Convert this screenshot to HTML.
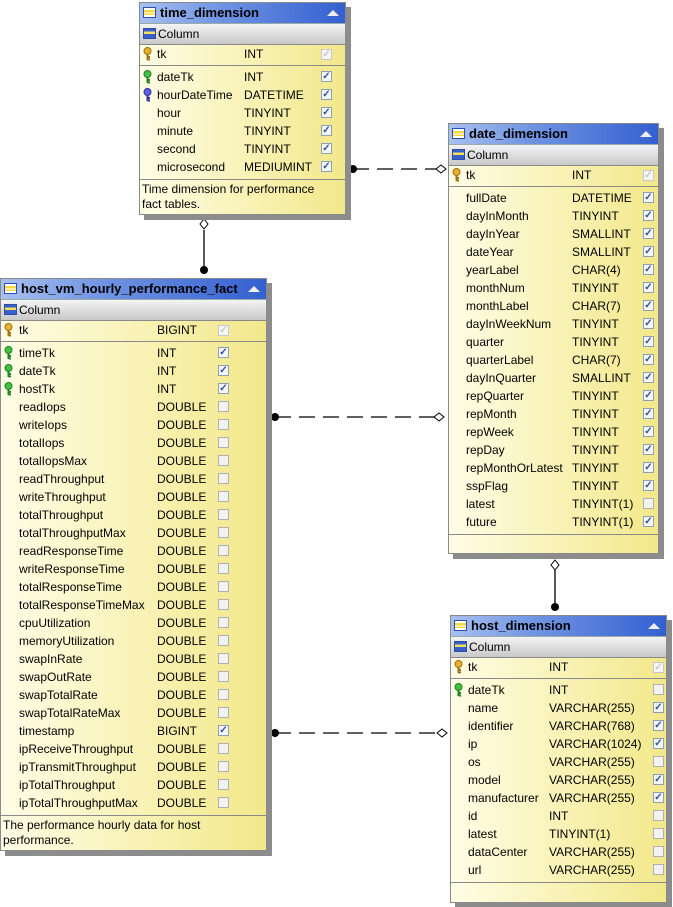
<!DOCTYPE html>
<html><head><meta charset="utf-8"><style>
body{margin:0;width:673px;height:907px;background:#fff;position:relative;overflow:hidden;font-family:"Liberation Sans",sans-serif;font-size:12px;color:#000}
.b{position:absolute;background:linear-gradient(to right,#fffde6,#f2e88a);border:1px solid #8a8a8a;box-shadow:5px 5px 0 #8c8c8c;box-sizing:border-box}
.ti{height:20px;background:linear-gradient(to right,#a8c0f0,#6f93e2 40%,#3460d0);font-weight:bold;font-size:13px;line-height:20px;padding-left:20px;position:relative;border-bottom:1px solid #9aa}
.ti:before,.co:before{content:"";position:absolute;left:3px;top:4px;width:13px;height:11px;border:1px solid #2c4ea8;background:linear-gradient(#fff 0 25%,#f4d840 25% 50%,#fff 50% 60%,#f4d840 60% 80%,#fff 80%);box-sizing:border-box}
.co:before{background:linear-gradient(#3a5fc8 0 30%,#f4e060 30% 55%,#3a5fc8 55%);}
.ti:after{content:"";position:absolute;right:6px;top:7px;border-left:6px solid transparent;border-right:6px solid transparent;border-bottom:6px solid #eee}
.co{height:21px;line-height:21px;background:linear-gradient(#f4f4f4,#c8c8c8);padding-left:18px;position:relative;border-bottom:1px solid #8a8a8a;box-sizing:border-box}
.pk{height:20px;position:relative;border-bottom:1px solid #8a8a8a}
.rs{padding:2px 0 3px;border-bottom:1px solid #8a8a8a}
.r{height:18px;position:relative}
.r span,.pk span{position:absolute;top:2px;white-space:nowrap}
.pk span{top:2px}
.c{position:absolute;top:3px;width:11px;height:11px;border:1px solid #8da0b4;background:#f4f6f8;box-sizing:border-box;font-size:10px;line-height:9px;text-align:center;color:#3050a0;font-weight:bold}
.pk .c{top:4px;border-color:#c8c8c8;color:#c8c8c8}
.u{border-color:#b0b0b0;background:#f2f2f2}
.k{position:absolute;left:3px;top:2px;width:9px;height:14px}
.d{padding:2px 12px 3px 2px;line-height:15px}
</style></head><body>
<svg width="673" height="907" style="position:absolute;left:0;top:0">
<g stroke="#000" stroke-width="1.3">
<line x1="353" y1="169" x2="440" y2="169" stroke-dasharray="16,8"/>
<line x1="204" y1="230" x2="204" y2="270"/>
<line x1="275" y1="417" x2="436" y2="417" stroke-dasharray="16,8"/>
<line x1="275" y1="733" x2="440" y2="733" stroke-dasharray="16,8"/>
<line x1="555" y1="570" x2="555" y2="607"/>
</g>
<g fill="#000"><circle cx="353" cy="169" r="4"/><circle cx="204" cy="270" r="4"/><circle cx="275" cy="417" r="4"/><circle cx="275" cy="733" r="4"/><circle cx="555" cy="607" r="4"/></g>
<path d="M436,169 L441,165 L446,169 L441,173Z" fill="#fff" stroke="#000"/>
<path d="M204,219 L208,224 L204,229 L200,224Z" fill="#fff" stroke="#000"/>
<path d="M434,417 L439,413 L444,417 L439,421Z" fill="#fff" stroke="#000"/>
<path d="M437,733 L442,729 L447,733 L442,737Z" fill="#fff" stroke="#000"/>
<path d="M555,560 L559,565 L555,570 L551,565Z" fill="#fff" stroke="#000"/>
</svg>

<svg width="0" height="0" style="position:absolute"><defs>
<g id="ky"><circle cx="4.5" cy="4" r="3.5" fill="#e8b030" stroke="#a07010"/><path d="M4.5,7 V13 M4.5,10 H7 M4.5,12.5 H7" stroke="#a07010" stroke-width="2"/></g>
<g id="kg"><circle cx="4.5" cy="4" r="3.5" fill="#40c040" stroke="#208020"/><path d="M4.5,7 V13 M4.5,10 H7 M4.5,12.5 H7" stroke="#208020" stroke-width="2"/></g>
<g id="kb"><circle cx="4.5" cy="4" r="3.5" fill="#6060e0" stroke="#3030a0"/><path d="M4.5,7 V13 M4.5,10 H7 M4.5,12.5 H7" stroke="#3030a0" stroke-width="2"/></g>
</defs></svg>

<!-- time_dimension -->
<div class="b" style="left:139px;top:2px;width:207px;height:213px">
<div class="ti">time_dimension</div><div class="co">Column</div>
<div class="pk"><svg class="k"><use href="#ky"/></svg><span style="left:17px">tk</span><span style="left:104px">INT</span><b class="c" style="left:181px">✓</b></div>
<div class="rs">
<div class="r"><svg class="k"><use href="#kg"/></svg><span style="left:17px">dateTk</span><span style="left:104px">INT</span><b class="c" style="left:181px">✓</b></div>
<div class="r"><svg class="k"><use href="#kb"/></svg><span style="left:17px">hourDateTime</span><span style="left:104px">DATETIME</span><b class="c" style="left:181px">✓</b></div>
<div class="r"><span style="left:17px">hour</span><span style="left:104px">TINYINT</span><b class="c" style="left:181px">✓</b></div>
<div class="r"><span style="left:17px">minute</span><span style="left:104px">TINYINT</span><b class="c" style="left:181px">✓</b></div>
<div class="r"><span style="left:17px">second</span><span style="left:104px">TINYINT</span><b class="c" style="left:181px">✓</b></div>
<div class="r"><span style="left:17px">microsecond</span><span style="left:104px">MEDIUMINT</span><b class="c" style="left:181px">✓</b></div>
</div>
<div class="d">Time dimension for performance fact tables.</div>
</div>

<!-- date_dimension -->
<div class="b" style="left:448px;top:123px;width:211px;height:431px">
<div class="ti">date_dimension</div><div class="co">Column</div>
<div class="pk"><svg class="k"><use href="#ky"/></svg><span style="left:17px">tk</span><span style="left:123px">INT</span><b class="c" style="left:194px">✓</b></div>
<div class="rs">
<div class="r"><span style="left:17px">fullDate</span><span style="left:123px">DATETIME</span><b class="c" style="left:194px">✓</b></div>
<div class="r"><span style="left:17px">dayInMonth</span><span style="left:123px">TINYINT</span><b class="c" style="left:194px">✓</b></div>
<div class="r"><span style="left:17px">dayInYear</span><span style="left:123px">SMALLINT</span><b class="c" style="left:194px">✓</b></div>
<div class="r"><span style="left:17px">dateYear</span><span style="left:123px">SMALLINT</span><b class="c" style="left:194px">✓</b></div>
<div class="r"><span style="left:17px">yearLabel</span><span style="left:123px">CHAR(4)</span><b class="c" style="left:194px">✓</b></div>
<div class="r"><span style="left:17px">monthNum</span><span style="left:123px">TINYINT</span><b class="c" style="left:194px">✓</b></div>
<div class="r"><span style="left:17px">monthLabel</span><span style="left:123px">CHAR(7)</span><b class="c" style="left:194px">✓</b></div>
<div class="r"><span style="left:17px">dayInWeekNum</span><span style="left:123px">TINYINT</span><b class="c" style="left:194px">✓</b></div>
<div class="r"><span style="left:17px">quarter</span><span style="left:123px">TINYINT</span><b class="c" style="left:194px">✓</b></div>
<div class="r"><span style="left:17px">quarterLabel</span><span style="left:123px">CHAR(7)</span><b class="c" style="left:194px">✓</b></div>
<div class="r"><span style="left:17px">dayInQuarter</span><span style="left:123px">SMALLINT</span><b class="c" style="left:194px">✓</b></div>
<div class="r"><span style="left:17px">repQuarter</span><span style="left:123px">TINYINT</span><b class="c" style="left:194px">✓</b></div>
<div class="r"><span style="left:17px">repMonth</span><span style="left:123px">TINYINT</span><b class="c" style="left:194px">✓</b></div>
<div class="r"><span style="left:17px">repWeek</span><span style="left:123px">TINYINT</span><b class="c" style="left:194px">✓</b></div>
<div class="r"><span style="left:17px">repDay</span><span style="left:123px">TINYINT</span><b class="c" style="left:194px">✓</b></div>
<div class="r"><span style="left:17px">repMonthOrLatest</span><span style="left:123px">TINYINT</span><b class="c" style="left:194px">✓</b></div>
<div class="r"><span style="left:17px">sspFlag</span><span style="left:123px">TINYINT</span><b class="c" style="left:194px">✓</b></div>
<div class="r"><span style="left:17px">latest</span><span style="left:123px">TINYINT(1)</span><b class="c u" style="left:194px"></b></div>
<div class="r"><span style="left:17px">future</span><span style="left:123px">TINYINT(1)</span><b class="c" style="left:194px">✓</b></div>
</div>
</div>

<!-- host_vm_hourly_performance_fact -->
<div class="b" style="left:0px;top:278px;width:267px;height:573px">
<div class="ti">host_vm_hourly_performance_fact</div><div class="co">Column</div>
<div class="pk"><svg class="k"><use href="#ky"/></svg><span style="left:18px">tk</span><span style="left:156px">BIGINT</span><b class="c" style="left:217px">✓</b></div>
<div class="rs">
<div class="r"><svg class="k"><use href="#kg"/></svg><span style="left:18px">timeTk</span><span style="left:156px">INT</span><b class="c" style="left:217px">✓</b></div>
<div class="r"><svg class="k"><use href="#kg"/></svg><span style="left:18px">dateTk</span><span style="left:156px">INT</span><b class="c" style="left:217px">✓</b></div>
<div class="r"><svg class="k"><use href="#kg"/></svg><span style="left:18px">hostTk</span><span style="left:156px">INT</span><b class="c" style="left:217px">✓</b></div>
<div class="r"><span style="left:18px">readIops</span><span style="left:156px">DOUBLE</span><b class="c u" style="left:217px"></b></div>
<div class="r"><span style="left:18px">writeIops</span><span style="left:156px">DOUBLE</span><b class="c u" style="left:217px"></b></div>
<div class="r"><span style="left:18px">totalIops</span><span style="left:156px">DOUBLE</span><b class="c u" style="left:217px"></b></div>
<div class="r"><span style="left:18px">totalIopsMax</span><span style="left:156px">DOUBLE</span><b class="c u" style="left:217px"></b></div>
<div class="r"><span style="left:18px">readThroughput</span><span style="left:156px">DOUBLE</span><b class="c u" style="left:217px"></b></div>
<div class="r"><span style="left:18px">writeThroughput</span><span style="left:156px">DOUBLE</span><b class="c u" style="left:217px"></b></div>
<div class="r"><span style="left:18px">totalThroughput</span><span style="left:156px">DOUBLE</span><b class="c u" style="left:217px"></b></div>
<div class="r"><span style="left:18px">totalThroughputMax</span><span style="left:156px">DOUBLE</span><b class="c u" style="left:217px"></b></div>
<div class="r"><span style="left:18px">readResponseTime</span><span style="left:156px">DOUBLE</span><b class="c u" style="left:217px"></b></div>
<div class="r"><span style="left:18px">writeResponseTime</span><span style="left:156px">DOUBLE</span><b class="c u" style="left:217px"></b></div>
<div class="r"><span style="left:18px">totalResponseTime</span><span style="left:156px">DOUBLE</span><b class="c u" style="left:217px"></b></div>
<div class="r"><span style="left:18px">totalResponseTimeMax</span><span style="left:156px">DOUBLE</span><b class="c u" style="left:217px"></b></div>
<div class="r"><span style="left:18px">cpuUtilization</span><span style="left:156px">DOUBLE</span><b class="c u" style="left:217px"></b></div>
<div class="r"><span style="left:18px">memoryUtilization</span><span style="left:156px">DOUBLE</span><b class="c u" style="left:217px"></b></div>
<div class="r"><span style="left:18px">swapInRate</span><span style="left:156px">DOUBLE</span><b class="c u" style="left:217px"></b></div>
<div class="r"><span style="left:18px">swapOutRate</span><span style="left:156px">DOUBLE</span><b class="c u" style="left:217px"></b></div>
<div class="r"><span style="left:18px">swapTotalRate</span><span style="left:156px">DOUBLE</span><b class="c u" style="left:217px"></b></div>
<div class="r"><span style="left:18px">swapTotalRateMax</span><span style="left:156px">DOUBLE</span><b class="c u" style="left:217px"></b></div>
<div class="r"><span style="left:18px">timestamp</span><span style="left:156px">BIGINT</span><b class="c" style="left:217px">✓</b></div>
<div class="r"><span style="left:18px">ipReceiveThroughput</span><span style="left:156px">DOUBLE</span><b class="c u" style="left:217px"></b></div>
<div class="r"><span style="left:18px">ipTransmitThroughput</span><span style="left:156px">DOUBLE</span><b class="c u" style="left:217px"></b></div>
<div class="r"><span style="left:18px">ipTotalThroughput</span><span style="left:156px">DOUBLE</span><b class="c u" style="left:217px"></b></div>
<div class="r"><span style="left:18px">ipTotalThroughputMax</span><span style="left:156px">DOUBLE</span><b class="c u" style="left:217px"></b></div>
</div>
<div class="d">The performance hourly data for host performance.</div>
</div>

<!-- host_dimension -->
<div class="b" style="left:450px;top:615px;width:217px;height:288px">
<div class="ti">host_dimension</div><div class="co">Column</div>
<div class="pk"><svg class="k"><use href="#ky"/></svg><span style="left:17px">tk</span><span style="left:98px">INT</span><b class="c" style="left:202px">✓</b></div>
<div class="rs">
<div class="r"><svg class="k"><use href="#kg"/></svg><span style="left:17px">dateTk</span><span style="left:98px">INT</span><b class="c u" style="left:202px"></b></div>
<div class="r"><span style="left:17px">name</span><span style="left:98px">VARCHAR(255)</span><b class="c" style="left:202px">✓</b></div>
<div class="r"><span style="left:17px">identifier</span><span style="left:98px">VARCHAR(768)</span><b class="c" style="left:202px">✓</b></div>
<div class="r"><span style="left:17px">ip</span><span style="left:98px">VARCHAR(1024)</span><b class="c" style="left:202px">✓</b></div>
<div class="r"><span style="left:17px">os</span><span style="left:98px">VARCHAR(255)</span><b class="c u" style="left:202px"></b></div>
<div class="r"><span style="left:17px">model</span><span style="left:98px">VARCHAR(255)</span><b class="c" style="left:202px">✓</b></div>
<div class="r"><span style="left:17px">manufacturer</span><span style="left:98px">VARCHAR(255)</span><b class="c" style="left:202px">✓</b></div>
<div class="r"><span style="left:17px">id</span><span style="left:98px">INT</span><b class="c u" style="left:202px"></b></div>
<div class="r"><span style="left:17px">latest</span><span style="left:98px">TINYINT(1)</span><b class="c u" style="left:202px"></b></div>
<div class="r"><span style="left:17px">dataCenter</span><span style="left:98px">VARCHAR(255)</span><b class="c u" style="left:202px"></b></div>
<div class="r"><span style="left:17px">url</span><span style="left:98px">VARCHAR(255)</span><b class="c u" style="left:202px"></b></div>
</div>
</div>
</body></html>
